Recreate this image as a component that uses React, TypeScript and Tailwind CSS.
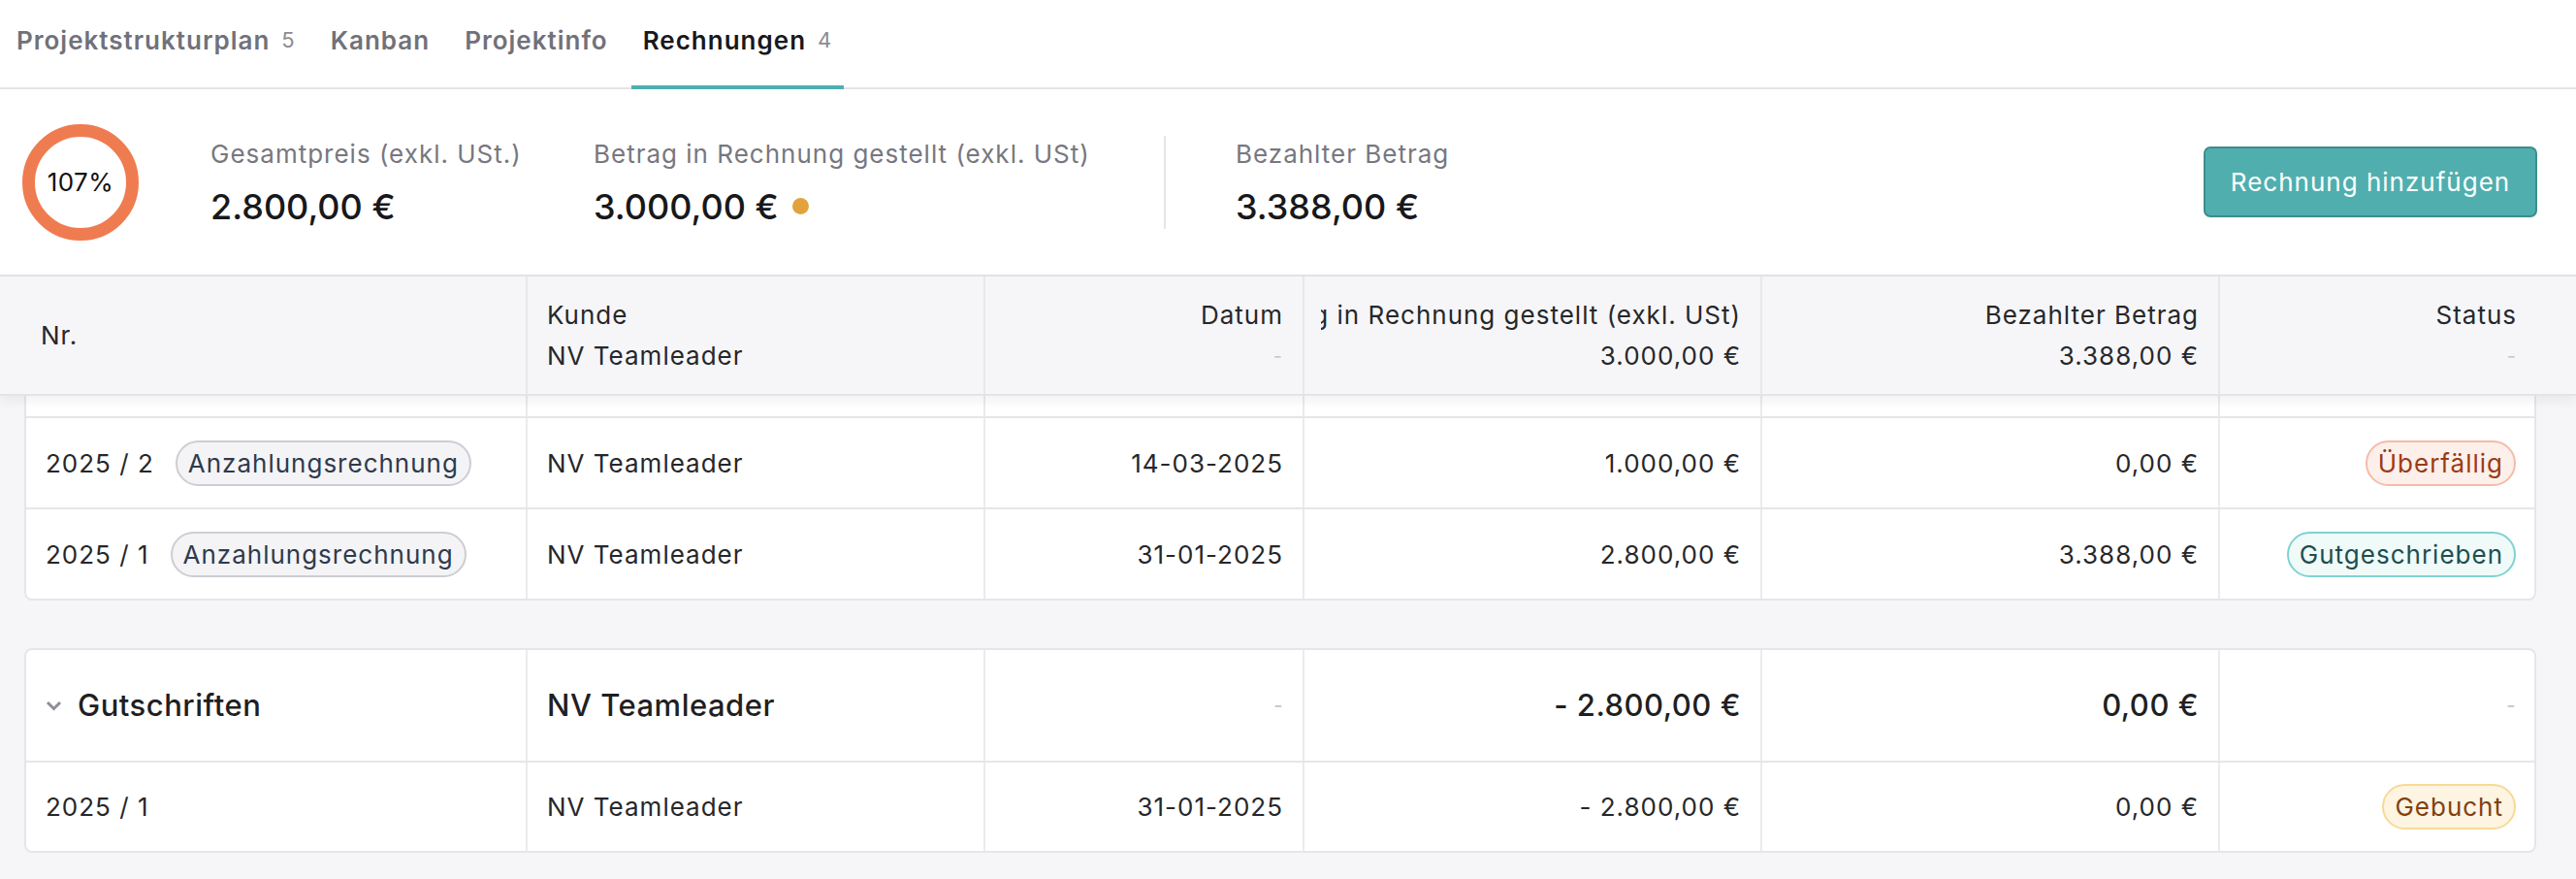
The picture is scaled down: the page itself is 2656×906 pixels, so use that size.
import React from "react";

const tabs = [
  { label: "Projektstrukturplan", count: "5" },
  { label: "Kanban" },
  { label: "Projektinfo" },
  { label: "Rechnungen", count: "4", active: true },
];

const statusStyles: Record<string, string> = {
  "Überfällig": "bg-[#fdefea] border-[#f4bba8] text-[#9a3b16]",
  Gutgeschrieben: "bg-[#effaf9] border-[#80d2cf] text-[#1d4f4d]",
  Gebucht: "bg-[#fdf4e2] border-[#f6da96] text-[#83400f]",
};

const invoices = [
  { nr: "2025 / 2", datum: "14-03-2025", betrag: "1.000,00 €", bezahlt: "0,00 €", status: "Überfällig" },
  { nr: "2025 / 1", datum: "31-01-2025", betrag: "2.800,00 €", bezahlt: "3.388,00 €", status: "Gutgeschrieben" },
];

const bodyCols = "grid grid-cols-[517px_472px_329px_472px_472px_324px]";
const headCols = "grid grid-cols-[519px_472px_329px_472px_472px_326px]";
const cell = "border-r-2 border-[#ebebee] px-[20px] flex items-center whitespace-nowrap";
const body = "text-[26px] tracking-[1px]";

function Dash() {
  return <span className="text-[#c8c8cc] text-[20px]">-</span>;
}

function Badge({ children, className }: { children: React.ReactNode; className: string }) {
  return (
    <span className={`inline-flex items-center rounded-full border-2 px-[11px] py-[3px] leading-[37px] ${body} ${className}`}>
      {children}
    </span>
  );
}

function InvoiceRow({ nr, datum, betrag, bezahlt, status, badge }: any) {
  return (
    <div className={`${bodyCols} h-[94px] border-t-2 border-[#e6e6e9] ${body} text-[#27272a]`}>
      <div className={`${cell} gap-[22px]`}>
        <span>{nr}</span>
        {badge && (
          <Badge className="bg-[#f4f4f6] border-[#cdcdd3] text-[#2f3a4c]">Anzahlungsrechnung</Badge>
        )}
      </div>
      <div className={cell}>NV Teamleader</div>
      <div className={`${cell} justify-end`}>{datum}</div>
      <div className={`${cell} justify-end`}>{betrag}</div>
      <div className={`${cell} justify-end`}>{bezahlt}</div>
      <div className="px-[19px] flex items-center justify-end">
        <Badge className={statusStyles[status]}>{status}</Badge>
      </div>
    </div>
  );
}

export default function App() {
  return (
    <div className="min-h-[906px] bg-[#f6f6f8] font-['Inter',sans-serif] text-[#18181b]">
      {/* tabs */}
      <div className="bg-white border-b-2 border-[#e4e4e7] h-[92px] flex items-stretch pl-[5px] gap-[12px]">
        {tabs.map((t) => (
          <div
            key={t.label}
            className={`px-[12px] flex items-center pb-[6px] -mb-[2px] border-b-4 text-[26px] tracking-[1px] font-semibold ${
              t.active ? "border-[#4fafb0] text-[#18181b]" : "border-transparent text-[#71717a]"
            }`}
          >
            {t.label}
            {t.count && <span className="ml-[12px] text-[22px] font-normal text-[#8b8b93]">{t.count}</span>}
          </div>
        ))}
      </div>

      {/* summary */}
      <div className="bg-white border-b-2 border-[#e4e4e7] h-[193px] flex items-center pl-[23px] pr-[40px]">
        <div className="relative w-[120px] h-[120px] flex items-center justify-center">
          <svg width="120" height="120" viewBox="0 0 120 120" className="absolute inset-0">
            <circle cx="60" cy="60" r="53.5" fill="none" stroke="#ef7c50" strokeWidth="13" />
          </svg>
          <span className="relative text-[26px] tracking-[0.5px] text-[#111]">107%</span>
        </div>
        <div className="ml-[74px] w-[395px] flex flex-col gap-[14px]">
          <span className="text-[26px] tracking-[1px] leading-[36px] text-[#77777f]">Gesamtpreis (exkl. USt.)</span>
          <span className="text-[36px] leading-[44px] font-medium">2.800,00 €</span>
        </div>
        <div className="w-[588px] flex flex-col gap-[14px]">
          <span className="text-[26px] tracking-[1px] leading-[36px] text-[#77777f]">Betrag in Rechnung gestellt (exkl. USt)</span>
          <span className="text-[36px] leading-[44px] font-medium flex items-center gap-[14px]">
            3.000,00 €<span className="w-[17px] h-[17px] rounded-full bg-[#e2a33c]" />
          </span>
        </div>
        <div className="w-[2px] h-[96px] bg-[#e6e6e9]" />
        <div className="ml-[72px] flex flex-col gap-[14px]">
          <span className="text-[26px] tracking-[1px] leading-[36px] text-[#77777f]">Bezahlter Betrag</span>
          <span className="text-[36px] leading-[44px] font-medium">3.388,00 €</span>
        </div>
        <button className="ml-auto w-[344px] h-[73px] rounded-[7px] bg-[#50afae] border-2 border-[#3e8d8b] text-white text-[26px] tracking-[1px]">
          Rechnung hinzufügen
        </button>
      </div>

      {/* table header */}
      <div className={`relative z-10 bg-[#f6f6f8] border-b-2 border-[#e4e4e7] shadow-[0_5px_12px_rgba(0,0,0,0.06)] pl-[25px] pr-[41px] ${headCols} h-[123px] ${body} leading-[36px] text-[#27272a]`}>
        <div className="border-r-2 border-[#e8e8eb] pl-[17px] flex items-center">Nr.</div>
        <div className="border-r-2 border-[#e8e8eb] px-[20px] flex flex-col justify-center gap-[6px]">
          <span>Kunde</span>
          <span>NV Teamleader</span>
        </div>
        <div className="border-r-2 border-[#e8e8eb] px-[20px] flex flex-col justify-center items-end gap-[6px]">
          <span>Datum</span>
          <Dash />
        </div>
        <div className="border-r-2 border-[#e8e8eb] px-[17px] flex flex-col justify-center gap-[6px]">
          <div className="overflow-hidden flex justify-end whitespace-nowrap pr-[3px]">
            <span className="shrink-0">Betrag in Rechnung gestellt (exkl. USt)</span>
          </div>
          <span className="text-right pr-[3px]">3.000,00 €</span>
        </div>
        <div className="border-r-2 border-[#e8e8eb] px-[20px] flex flex-col justify-center items-end gap-[6px]">
          <span>Bezahlter Betrag</span>
          <span>3.388,00 €</span>
        </div>
        <div className="px-[20px] flex flex-col justify-center items-end gap-[6px]">
          <span>Status</span>
          <Dash />
        </div>
      </div>

      {/* invoices card */}
      <div className="mx-[25px] mr-[41px] bg-white border-x-2 border-b-2 border-[#e6e6e9] rounded-b-[8px] overflow-hidden">
        <div className={`${bodyCols} h-[21px]`}>
          {[0, 1, 2, 3, 4].map((i) => (
            <div key={i} className="border-r-2 border-[#ebebee]" />
          ))}
          <div />
        </div>
        {invoices.map((r) => (
          <InvoiceRow key={r.nr} {...r} badge />
        ))}
      </div>

      {/* credit notes card */}
      <div className="mt-[49px] mx-[25px] mr-[41px] bg-white border-2 border-[#e6e6e9] rounded-[8px] overflow-hidden">
        <div className={`${bodyCols} h-[114px] text-[31px] tracking-[0.5px] font-medium text-[#1f1f23]`}>
          <div className={`${cell} gap-[16px]`}>
            <svg width="17" height="11" viewBox="0 0 17 11">
              <polyline points="2,2 8.5,8.5 15,2" fill="none" stroke="#8e8e96" strokeWidth="3" />
            </svg>
            <span>Gutschriften</span>
          </div>
          <div className={cell}>NV Teamleader</div>
          <div className={`${cell} justify-end`}>
            <Dash />
          </div>
          <div className={`${cell} justify-end`}>- 2.800,00 €</div>
          <div className={`${cell} justify-end`}>0,00 €</div>
          <div className="px-[19px] flex items-center justify-end">
            <Dash />
          </div>
        </div>
        <div className={`${bodyCols} h-[93px] border-t-2 border-[#e6e6e9] ${body} text-[#27272a]`}>
          <div className={cell}>2025 / 1</div>
          <div className={cell}>NV Teamleader</div>
          <div className={`${cell} justify-end`}>31-01-2025</div>
          <div className={`${cell} justify-end`}>- 2.800,00 €</div>
          <div className={`${cell} justify-end`}>0,00 €</div>
          <div className="px-[19px] flex items-center justify-end">
            <Badge className={statusStyles.Gebucht}>Gebucht</Badge>
          </div>
        </div>
      </div>
    </div>
  );
}
